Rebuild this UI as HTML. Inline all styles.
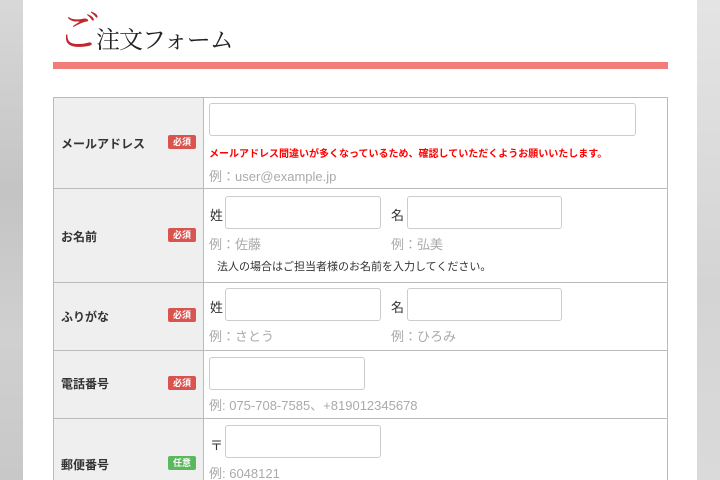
<!DOCTYPE html>
<html style="overflow:hidden"><head><meta charset="utf-8"><style>
html,body{margin:0;width:720px;height:480px;overflow:hidden}
body{background:#fff;font-family:"Liberation Sans","Noto Sans CJK JP",sans-serif;position:relative}
.a{position:absolute}
.sideL{left:0;top:0;width:23px;height:480px;background:linear-gradient(#d8d8d8,#c4c4c4 40%,#d0d0d0 70%,#c8c8c8)}
.sideR{left:697px;top:0;width:23px;height:480px;background:linear-gradient(#e4e4e4,#d4d4d4 60%,#dadada)}
.lab{background:#efefef;border-right:1px solid #bbb}
.hl{height:1px;background:#bbb;left:53px;width:615px}
.inp{border:1px solid #ccc;border-radius:3px;background:#fff;box-sizing:border-box}
.lt{left:61px;font-size:12px;font-weight:bold;color:#333}
.bd{left:168px;width:28px;height:14px;border-radius:2px;color:#fff;font-size:9px;font-weight:bold;text-align:center;line-height:14px}
.r{background:#d9534f}.g{background:#5cb85c}
.ex{font-size:13px;color:#aaa}
.t{font-size:13px;color:#333}
</style></head><body>
<div class="a sideL"></div><div class="a sideR"></div>
<div class="a" style="left:58px;top:4px;font-family:'Noto Serif CJK SC','Liberation Serif',serif;font-size:42px;color:#c0282d;line-height:50px">ご</div>
<div class="a" style="left:96px;top:22px;font-family:'Noto Serif CJK SC','Liberation Serif',serif;font-size:24px;color:#222;line-height:32px;letter-spacing:-1px">注文フォーム</div>
<div class="a" style="left:53px;top:62px;width:615px;height:7px;background:#f27c7a"></div>
<div class="a" style="left:53px;top:97px;width:613px;height:383px;border:1px solid #bbb;border-bottom:none"></div>
<div class="a lab" style="left:54px;top:98px;width:149px;height:382px"></div>
<div class="a hl" style="top:188px"></div>
<div class="a hl" style="top:282px"></div>
<div class="a hl" style="top:350px"></div>
<div class="a hl" style="top:418px"></div>

<div class="a lt" style="top:135px">メールアドレス</div><div class="a bd r" style="top:135px">必須</div>
<div class="a inp" style="left:209px;top:103px;width:427px;height:33px"></div>
<div class="a" style="left:209px;top:145px;font-size:10px;font-weight:bold;color:#f00">メールアドレス間違いが多くなっているため、確認していただくようお願いいたします。</div>
<div class="a ex" style="left:209px;top:166px">例：user@example.jp</div>

<div class="a lt" style="top:228px">お名前</div><div class="a bd r" style="top:228px">必須</div>
<div class="a t" style="left:210px;top:205px">姓</div>
<div class="a inp" style="left:225px;top:196px;width:156px;height:33px"></div>
<div class="a t" style="left:391px;top:205px">名</div>
<div class="a inp" style="left:407px;top:196px;width:155px;height:33px"></div>
<div class="a ex" style="left:209px;top:234px">例：佐藤</div>
<div class="a ex" style="left:391px;top:234px">例：弘美</div>
<div class="a" style="left:217px;top:258px;font-size:11px;color:#333">法人の場合はご担当者様のお名前を入力してください。</div>

<div class="a lt" style="top:308px">ふりがな</div><div class="a bd r" style="top:308px">必須</div>
<div class="a t" style="left:210px;top:297px">姓</div>
<div class="a inp" style="left:225px;top:288px;width:156px;height:33px"></div>
<div class="a t" style="left:391px;top:297px">名</div>
<div class="a inp" style="left:407px;top:288px;width:155px;height:33px"></div>
<div class="a ex" style="left:209px;top:326px">例：さとう</div>
<div class="a ex" style="left:391px;top:326px">例：ひろみ</div>

<div class="a lt" style="top:375px">電話番号</div><div class="a bd r" style="top:376px">必須</div>
<div class="a inp" style="left:209px;top:357px;width:156px;height:33px"></div>
<div class="a ex" style="left:209px;top:395px">例: 075-708-7585、+819012345678</div>

<div class="a lt" style="top:456px">郵便番号</div><div class="a g bd" style="top:456px">任意</div>
<div class="a t" style="left:210px;top:435px">〒</div>
<div class="a inp" style="left:225px;top:425px;width:156px;height:33px"></div>
<div class="a ex" style="left:209px;top:463px">例: 6048121</div>
</body></html>
